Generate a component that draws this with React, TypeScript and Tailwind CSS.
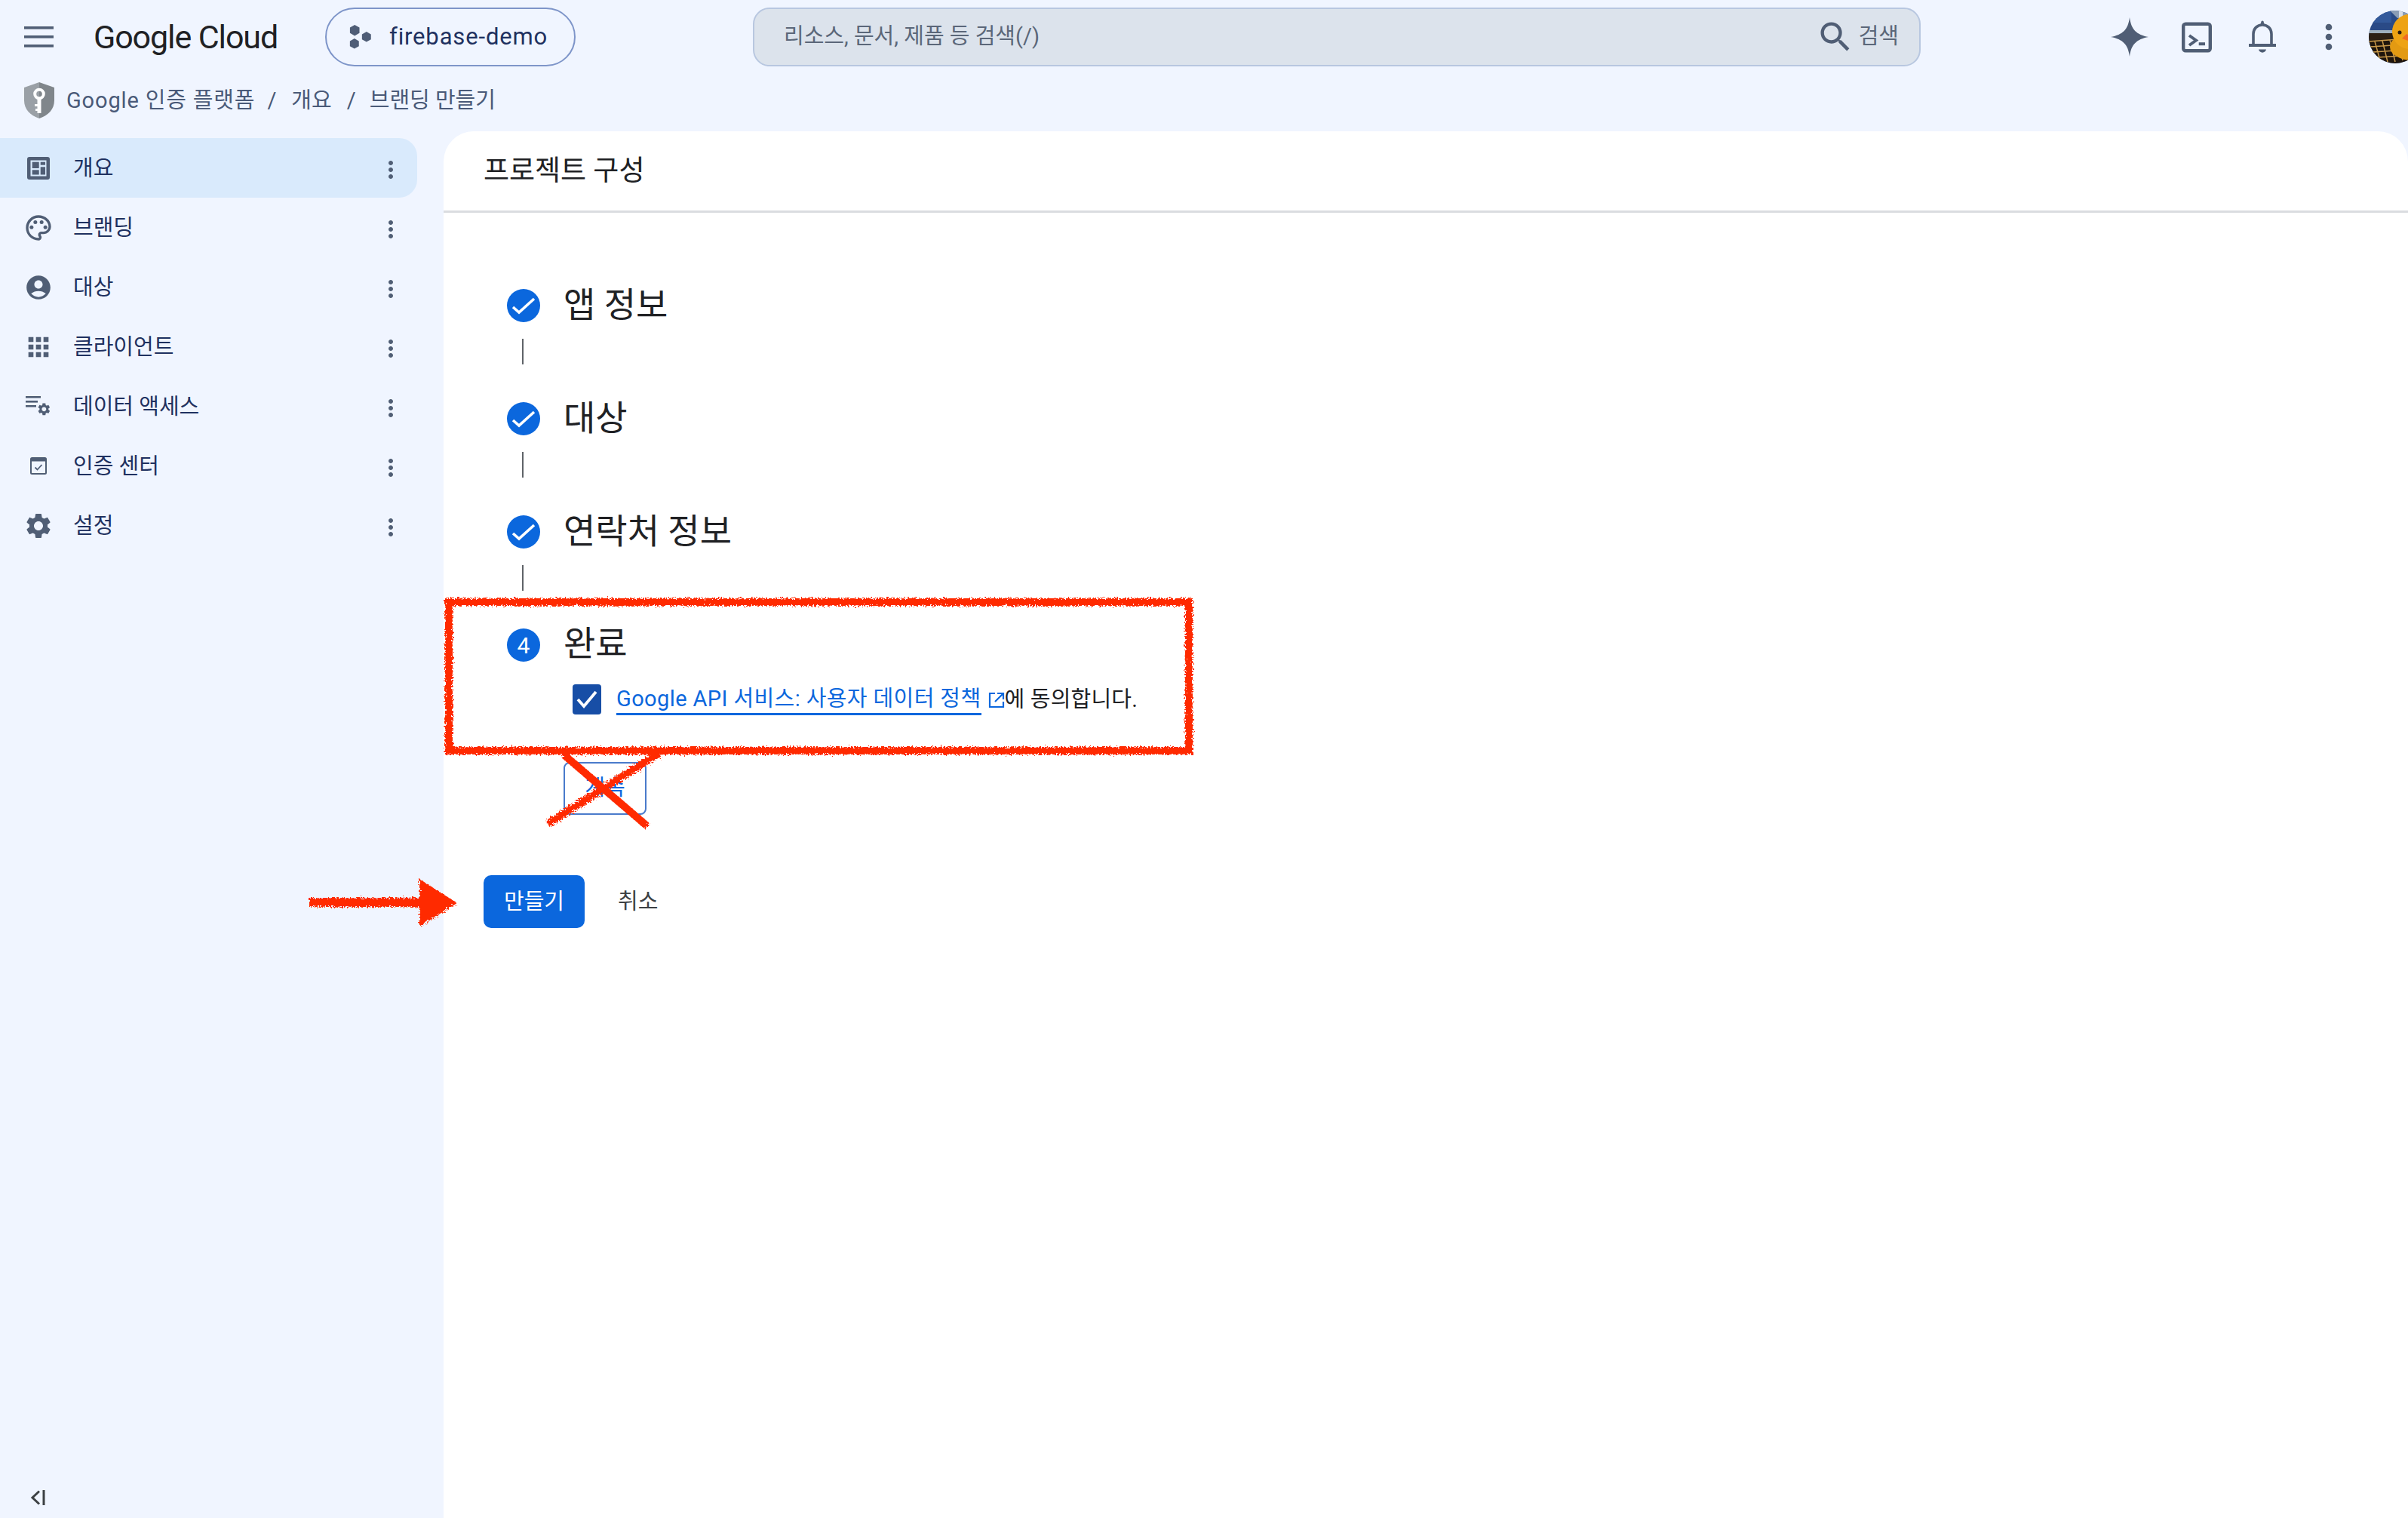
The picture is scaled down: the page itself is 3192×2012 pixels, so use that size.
import { ReactNode } from "react";
import {
  MdAccountCircle,
  MdApps,
  MdMoreVert,
  MdOutlinePalette,
  MdSearch,
  MdSettings,
} from "react-icons/md";

const GEAR =
  "M19.14 12.94c.04-.3.06-.61.06-.94 0-.32-.02-.64-.07-.94l2.03-1.58c.18-.14.23-.41.12-.61l-1.92-3.32c-.12-.22-.37-.29-.59-.22l-2.39.96c-.5-.38-1.03-.7-1.62-.94l-.36-2.54c-.04-.24-.24-.41-.48-.41h-3.84c-.24 0-.43.17-.47.41l-.36 2.54c-.59.24-1.13.57-1.62.94l-2.39-.96c-.22-.08-.47 0-.59.22L2.74 8.87c-.12.21-.08.47.12.61l2.03 1.58c-.05.3-.09.63-.09.94s.02.64.07.94l-2.03 1.58c-.18.14-.23.41-.12.61l1.92 3.32c.12.22.37.29.59.22l2.39-.96c.5.38 1.03.7 1.62.94l.36 2.54c.05.24.24.41.48.41h3.84c.24 0 .44-.17.47-.41l.36-2.54c.59-.24 1.13-.56 1.62-.94l2.39.96c.22.08.47 0 .59-.22l1.92-3.32c.12-.22.07-.47-.12-.61l-2.01-1.58zM12 15.6c-1.98 0-3.6-1.62-3.6-3.6s1.62-3.6 3.6-3.6 3.6 1.62 3.6 3.6-1.62 3.6-3.6 3.6z";

function DashboardIcon() {
  return (
    <svg width="30" height="30" viewBox="0 0 30 30">
      <rect width="30" height="30" rx="3" fill="#505e75" />
      <rect x="4.5" y="4.5" width="21" height="21" fill="#d9eafc" />
      <rect x="6.7" y="6.7" width="9" height="8.3" fill="#505e75" />
      <rect x="17.7" y="6.7" width="6.3" height="4" fill="#505e75" />
      <rect x="6.7" y="17.3" width="9" height="6.2" fill="#505e75" />
      <rect x="17.7" y="13.3" width="6.3" height="10.2" fill="#505e75" />
    </svg>
  );
}

function DataAccessIcon() {
  return (
    <svg width="34" height="27" viewBox="0 0 34 27">
      <rect width="20" height="2.6" fill="#505e75" />
      <rect y="6" width="16" height="2.6" fill="#505e75" />
      <rect y="12" width="14" height="2.6" fill="#505e75" />
      <g transform="translate(14.5 7.5) scale(0.82)">
        <path d={GEAR} fill="#505e75" />
      </g>
    </svg>
  );
}

function CheckBoxIcon() {
  return (
    <svg width="22" height="23" viewBox="0 0 22 23">
      <rect x="1" y="1" width="20" height="21" rx="1.5" fill="none" stroke="#505e75" strokeWidth="2" />
      <rect x="1" y="1" width="20" height="4.5" fill="#505e75" />
      <path d="M6.5 13.5l3 3 6-6.5" fill="none" stroke="#505e75" strokeWidth="1.8" />
    </svg>
  );
}

const NAV: { label: string; icon: ReactNode }[] = [
  { label: "개요", icon: <DashboardIcon /> },
  { label: "브랜딩", icon: <MdOutlinePalette size={40} /> },
  { label: "대상", icon: <MdAccountCircle size={38} /> },
  { label: "클라이언트", icon: <MdApps size={40} /> },
  { label: "데이터 액세스", icon: <DataAccessIcon /> },
  { label: "인증 센터", icon: <CheckBoxIcon /> },
  { label: "설정", icon: <MdSettings size={40} /> },
];

function Avatar() {
  return (
    <div className="h-[70px] w-[70px] shrink-0 overflow-hidden rounded-full">
      <svg width="70" height="70" viewBox="0 0 70 70">
        <rect width="70" height="70" fill="#2a4a86" />
        <rect x="0" y="0" width="30" height="16" fill="#33599a" />
        <path d="M28 0H56V12L38 10z" fill="#8b9db5" />
        <rect x="40" y="0" width="5" height="12" fill="#d6dde6" />
        <rect y="26" width="50" height="4" fill="#9fb0bd" />
        <rect y="30" width="50" height="10" fill="#2d2013" />
        <rect y="40" width="70" height="30" fill="#1f150c" />
        <g fill="none" stroke="#c9994a" strokeWidth="1.5">
          <path d="M0 41L40 38M2 48L46 45M6 55L50 52M12 62L56 59M8 41L15 66M18 40L25 68M28 39L35 68M38 38L45 66" />
        </g>
        <ellipse cx="58" cy="48" rx="30" ry="18" fill="#e39a12" />
        <circle cx="54" cy="28" r="23" fill="#eea314" />
        <circle cx="41" cy="29" r="2.5" fill="#2a1c10" />
        <path d="M44 37L50 31L62 37L55 41z" fill="#f26a21" />
      </svg>
    </div>
  );
}

function Header() {
  return (
    <header className="flex h-[98px] items-center pl-[32px]">
      <svg width="39" height="28" viewBox="0 0 39 28" className="shrink-0">
        <rect width="39" height="3.6" y="0" fill="#505e75" />
        <rect width="39" height="3.6" y="12" fill="#505e75" />
        <rect width="39" height="3.6" y="24" fill="#505e75" />
      </svg>
      <span className="ml-[53px] w-[244px] shrink-0 whitespace-nowrap text-[43px] font-normal tracking-[-1.1px] text-[#202124]">
        Google Cloud
      </span>
      <div className="ml-[63px] flex h-[78px] w-[332px] shrink-0 items-center rounded-full border-2 border-[#7e95c9] pl-[30px]">
        <svg width="30" height="32" viewBox="0 0 30 32" fill="#4f5d76">
          <polygon points="8,0 15,4 15,12 8,16 1,12 1,4" transform="translate(0 0) scale(0.9)" />
          <polygon points="8,0 15,4 15,12 8,16 1,12 1,4" transform="translate(16 9) scale(0.85)" />
          <polygon points="8,0 15,4 15,12 8,16 1,12 1,4" transform="translate(0 18) scale(0.85)" />
        </svg>
        <span className="ml-[23px] text-[31px] tracking-[0.85px] text-[#1f3160]">firebase-demo</span>
      </div>
      <div className="ml-[235px] flex h-[78px] w-[1548px] shrink-0 items-center rounded-[22px] border-2 border-[#b8c7e0] bg-[#dce3ec] pl-[39px] pr-[27px]">
        <span className="flex-1 text-[29px] text-[#5b6779]">리소스, 문서, 제품 등 검색(/)</span>
        <MdSearch size={52} className="text-[#505e75]" />
        <span className="ml-[5px] text-[29px] text-[#5b6779]">검색</span>
      </div>
      <svg width="50" height="52" viewBox="0 0 50 52" fill="#505e75" className="ml-[252px] shrink-0">
        <path d="M25 0C27 16 34 23 50 26C34 29 27 36 25 52C23 36 16 29 0 26C16 23 23 16 25 0Z" />
      </svg>
      <svg width="40" height="41" viewBox="0 0 40 40" className="ml-[44px] shrink-0">
        <rect x="2.2" y="2.2" width="35.6" height="35.6" rx="3" fill="none" stroke="#505e75" strokeWidth="4.4" />
        <path d="M10 17.5L19 24L10 30.5" fill="none" stroke="#505e75" strokeWidth="4" />
        <rect x="22.7" y="26.7" width="8.3" height="4" fill="#505e75" />
      </svg>
      <svg width="36" height="44" viewBox="0 0 36 44" className="ml-[49px] shrink-0">
        <path d="M6 32V18C6 11 11 6 18 6S30 11 30 18V32" fill="none" stroke="#505e75" strokeWidth="3.6" />
        <path d="M15 6.5L16.5 1.5C17 0 19 0 19.5 1.5L21 6.5z" fill="#505e75" />
        <rect y="31" width="36" height="4" fill="#505e75" />
        <path d="M13 38.5H23C22 44 14 44 13 38.5z" fill="#505e75" />
      </svg>
      <MdMoreVert size={52} className="ml-[44px] shrink-0 text-[#505e75]" />
      <div className="ml-[27px] shrink-0">
        <Avatar />
      </div>
    </header>
  );
}

function Breadcrumb() {
  return (
    <div className="flex h-[76px] items-center pl-[32px] pb-[4px] text-[29px] text-[#4a5a78]">
      <svg width="40" height="48" viewBox="0 0 40 48" className="-mt-[2px] shrink-0">
        <defs>
          <linearGradient id="shield" x1="0" x2="1" y1="0" y2="0">
            <stop offset="0.5" stopColor="#9aa0a6" />
            <stop offset="0.5" stopColor="#80868b" />
          </linearGradient>
        </defs>
        <path d="M20 0L40 7v17c0 12-8 20-20 24C8 44 0 36 0 24V7z" fill="url(#shield)" />
        <circle cx="20" cy="15.5" r="5.8" fill="none" stroke="#fff" strokeWidth="4" />
        <path d="M20 21v20" stroke="#fff" strokeWidth="5" fill="none" />
        <path d="M14 30.5h5M15 36.5h4" stroke="#fff" strokeWidth="3" fill="none" />
      </svg>
      <span className="ml-[16px] tracking-[0.85px]">Google 인증 플랫폼</span>
      <span className="ml-[16px]">/</span>
      <span className="ml-[20px]">개요</span>
      <span className="ml-[20px]">/</span>
      <span className="ml-[18px]">브랜딩 만들기</span>
    </div>
  );
}

function Sidebar() {
  return (
    <aside className="flex w-[588px] shrink-0 flex-col pt-[9px] pb-[17px]">
      {NAV.map((item, i) => (
        <div
          key={item.label}
          className={
            i === 0
              ? "flex h-[79px] w-[553px] items-center rounded-r-[24px] bg-[#d9eafc]"
              : "flex h-[79px] w-[553px] items-center"
          }
        >
          <div className="flex w-[97px] shrink-0 items-center justify-center pl-[5px] text-[#505e75]">{item.icon}</div>
          <span className="flex-1 pt-[2px] text-[29px] text-[#1f3160]">{item.label}</span>
          <MdMoreVert size={36} className="mr-[17px] mt-[4px] text-[#505e75]" />
        </div>
      ))}
      <svg width="20" height="20" viewBox="0 0 20 20" className="ml-[40px] mt-auto" fill="none" stroke="#3c4043" strokeWidth="3">
        <path d="M12 1.5L3 10l9 8.5" />
        <path d="M18 0v20" />
      </svg>
    </aside>
  );
}

function CheckCircle() {
  return (
    <svg width="44" height="44" viewBox="0 0 44 44" className="shrink-0">
      <circle cx="22" cy="22" r="22" fill="#0b67dd" />
      <path d="M8 24L16 31L36 13" fill="none" stroke="#fff" strokeWidth="3.6" />
    </svg>
  );
}

function Step({ title }: { title: string }) {
  return (
    <div>
      <div className="flex h-[44px] items-center gap-[31px]">
        <CheckCircle />
        <span className="pb-[3px] text-[46px] leading-none text-[#202124]">{title}</span>
      </div>
      <div className="mb-[50px] ml-[20px] mt-[22px] h-[34px] w-[2px] bg-[#5f6368]" />
    </div>
  );
}

function Main() {
  return (
    <main className="flex-1 rounded-t-[40px] bg-white">
      <div className="flex h-[108px] items-center border-b-[3px] border-[#dadce0] pl-[53px] text-[37px] text-[#202124]">
        프로젝트 구성
      </div>
      <div className="pl-[53px] pt-[101px]">
        <div className="pl-[31px]">
          <Step title="앱 정보" />
          <Step title="대상" />
          <Step title="연락처 정보" />
          <div className="mt-[2px] flex h-[44px] items-center gap-[31px]">
            <div className="flex h-[44px] w-[44px] shrink-0 items-center justify-center rounded-full bg-[#0b67dd] text-[30px] text-white">
              4
            </div>
            <span className="pb-[5px] text-[46px] leading-none text-[#202124]">완료</span>
          </div>
          <div className="ml-[87px] mt-[30px] flex h-[40px] items-center gap-[20px]">
            <div className="flex h-[40px] w-[38px] shrink-0 items-center justify-center rounded-[4px] bg-[#174ea6]">
              <svg width="30" height="26" viewBox="0 0 30 26" fill="none" stroke="#fff" strokeWidth="3.8">
                <path d="M3 13l8 9L27 3" />
              </svg>
            </div>
            <div className="flex items-center pt-[2px] text-[29px] text-[#202124]">
              <span className="border-b-[3px] border-[#0b67dd] leading-[37px] tracking-[0.4px] text-[#0b67dd]">
                Google API 서비스: 사용자 데이터 정책
              </span>
              <svg width="22" height="22" viewBox="0 0 22 22" fill="none" stroke="#0b67dd" strokeWidth="2.2" className="ml-[9px]">
                <path d="M9 2H2v18h18v-7M12 2h8v8M20 2L9 13" />
              </svg>
              <span className="tracking-[0.2px]">에 동의합니다.</span>
            </div>
          </div>
          <button className="ml-[75px] mt-[63px] flex h-[70px] w-[110px] items-center justify-center rounded-[8px] border-2 border-[#4a7bcb] text-[29px] text-[#0b67dd]">
            계속
          </button>
        </div>
        <div className="mt-[80px] flex items-center gap-[44px]">
          <button className="h-[70px] w-[134px] rounded-[10px] bg-[#0b67dd] pt-[2px] text-[29px] text-white">만들기</button>
          <span className="pt-[2px] text-[29px] text-[#3c4043]">취소</span>
        </div>
      </div>
    </main>
  );
}

// hand drawn red marks on top of the screenshot
function Annotations() {
  return (
    <svg width="3192" height="2012" viewBox="0 0 3192 2012" className="pointer-events-none absolute inset-0">
      <defs>
        <filter id="rough" x="-5%" y="-5%" width="110%" height="110%">
          <feTurbulence type="fractalNoise" baseFrequency="0.45" numOctaves="2" seed="4" />
          <feDisplacementMap in="SourceGraphic" scale="9" />
        </filter>
      </defs>
      <g filter="url(#rough)" fill="none" stroke="#ff2a00" strokeWidth="10">
        <rect x="595" y="798" width="981" height="197" />
        <path d="M747 1000L858 1095" strokeWidth="10" />
        <path d="M874 998L726 1092" strokeWidth="10" />
        <path d="M410 1196H570" strokeWidth="12" />
        <path d="M556 1165L606 1197L556 1228Z" fill="#ff2a00" stroke="none" />
      </g>
    </svg>
  );
}

export default function App() {
  return (
    <div
      className="relative flex h-[2012px] w-[3192px] flex-col overflow-hidden bg-[#f0f5ff]"
      style={{ fontFamily: 'Roboto, "Noto Sans CJK KR", sans-serif' }}
    >
      <Header />
      <Breadcrumb />
      <div className="flex flex-1">
        <Sidebar />
        <Main />
      </div>
      <Annotations />
    </div>
  );
}
